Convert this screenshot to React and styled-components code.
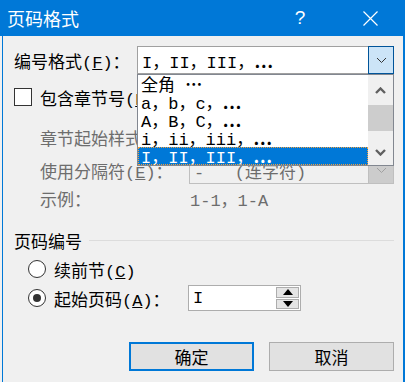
import styled, { createGlobalStyle } from 'styled-components'

const GlobalStyle = createGlobalStyle`
  html, body { margin: 0; padding: 0; background: #f0f0f0; }
  body {
    font-family: 'Liberation Mono', 'Noto Sans CJK SC', monospace;
    font-size: 17px;
    color: #000;
  }
  * { box-sizing: border-box; }
`

const Window = styled.div`
  width: 405px;
  height: 382px;
  display: flex;
  flex-direction: column;
  overflow: hidden;
`
const TitleBar = styled.div`
  height: 36px;
  flex: none;
  background: #0078d7;
  color: #fff;
  display: flex;
  align-items: center;
  padding: 0 12px 0 7px;
  font-family: 'Noto Sans CJK SC', sans-serif;
  font-size: 18px;
`
const Title = styled.div`
  flex: 1;
  line-height: 1;
`
const HelpBtn = styled.div`
  width: 46px;
  text-align: center;
  font-family: 'Liberation Sans', sans-serif;
  font-size: 19px;
  margin-right: 24px;
`
const CloseBtn = styled.div`
  width: 46px;
  display: flex;
  justify-content: center;
  align-items: center;
`
const Body = styled.div`
  flex: 1;
  margin-left: 2px;
  border-left: 1px solid #0078d7;
  border-right: 2px solid #0078d7;
  padding: 10px 9px 0 11px;
  display: flex;
  flex-direction: column;
`
const Row = styled.div`
  display: flex;
  align-items: center;
  height: ${({ h }) => h || 20}px;
  margin-top: ${({ mt }) => mt || 0}px;
  padding-left: ${({ indent }) => indent || 0}px;
  gap: ${({ gap }) => gap || 0}px;
  color: ${({ disabled }) => (disabled ? '#6d6d6d' : '#000')};
  white-space: pre;
`
const Label = styled.div`
  width: ${({ w }) => w}px;
  flex: none;
  white-space: pre;
`
const Combo = styled.div`
  position: relative;
  width: ${({ w }) => w}px;
  height: 28px;
  display: flex;
  align-items: center;
  border: 1px solid ${({ disabled }) => (disabled ? '#bfbfbf' : '#a0a0a0')};
  background: ${({ disabled }) => (disabled ? '#f0f0f0' : '#fff')};
  color: ${({ disabled }) => (disabled ? '#6d6d6d' : '#000')};
`
const ComboText = styled.div`
  flex: 1;
  padding-left: 4px;
  white-space: pre;
`
const DropBtn = styled.div`
  width: 26px;
  height: 28px;
  margin: -1px -1px -1px 0;
  display: flex;
  align-items: center;
  justify-content: center;
  background: ${({ disabled }) => (disabled ? '#cccccc' : '#cce4f7')};
  border: 1px solid ${({ disabled }) => (disabled ? '#bfbfbf' : '#005499')};
`
const List = styled.div`
  position: absolute;
  top: 27px;
  left: -1px;
  width: 257px;
  height: 92px;
  border: 1px solid #828790;
  background: #fff;
  display: flex;
  z-index: 5;
`
const Items = styled.div`
  flex: 1;
  display: flex;
  flex-direction: column;
`
const Item = styled.div`
  height: 18px;
  line-height: 18px;
  padding-left: 3px;
  white-space: pre;
  background: ${({ selected }) => (selected ? '#0078d7' : 'transparent')};
  color: ${({ selected }) => (selected ? '#fff' : '#000')};
  outline: ${({ selected }) => (selected ? '1px dotted #f0a040' : 'none')};
  outline-offset: -1px;
`
const Dots = styled.span`
  font-family: 'Noto Sans CJK SC', sans-serif;
  font-weight: 700;
  letter-spacing: 1px;
`
const ScrollBar = styled.div`
  width: 25px;
  background: #f0f0f0;
  display: flex;
  flex-direction: column;
`
const ScrollArrow = styled.div`
  height: ${({ h }) => h}px;
  display: flex;
  align-items: center;
  justify-content: center;
`
const Thumb = styled.div`
  height: 26px;
  background: #cdcdcd;
`
const Gap = styled.div`
  flex: 1;
`
const CheckBox = styled.div`
  width: 18px;
  height: 18px;
  border: 1px solid #333;
  background: #fff;
  flex: none;
`
const Radio = styled.div`
  width: 18px;
  height: 18px;
  border-radius: 50%;
  border: 1px solid #333;
  background: #fff;
  flex: none;
  display: flex;
  align-items: center;
  justify-content: center;
  &::after {
    content: '';
    display: ${({ checked }) => (checked ? 'block' : 'none')};
    width: 8px;
    height: 8px;
    border-radius: 50%;
    background: #333;
  }
`
const Line = styled.div`
  flex: 1;
  height: 1px;
  background: #dcdcdc;
  margin-left: 7px;
`
const SpinBox = styled.div`
  width: 113px;
  height: 26px;
  border: 1px solid #adadad;
  background: #fff;
  display: flex;
  align-items: center;
`
const SpinText = styled.div`
  flex: 1;
  padding-left: 4px;
`
const SpinBtns = styled.div`
  width: 24px;
  height: 100%;
  display: flex;
  flex-direction: column;
  padding: 1px 1px 1px 0;
  gap: 1px;
`
const SpinBtn = styled.div`
  flex: 1;
  background: #e5e5e5;
  border: 1px solid #adadad;
  display: flex;
  align-items: center;
  justify-content: center;
`
const Footer = styled.div`
  display: flex;
  justify-content: flex-end;
  gap: 15px;
  margin-top: 31px;
`
const Button = styled.div`
  width: 125px;
  height: 29px;
  display: flex;
  align-items: center;
  justify-content: center;
  background: #e1e1e1;
  border: ${({ primary }) => (primary ? '2px solid #0078d7' : '1px solid #adadad')};
  font-family: 'Noto Sans CJK SC', sans-serif;
`

const Chevron = ({ color = '#333', up, bold }) => (
  <svg width="11" height="7" viewBox="0 0 11 7">
    <polyline
      points={up ? '1,6 5.5,1.5 10,6' : '1,1 5.5,5.5 10,1'}
      fill="none"
      stroke={color}
      strokeWidth={bold ? 2.4 : 1}
    />
  </svg>
)

const Tri = ({ up }) => (
  <svg width="10" height="6" viewBox="0 0 10 6">
    <polygon points={up ? '0,6 5,0 10,6' : '0,0 10,0 5,6'} fill="#000" />
  </svg>
)

const formats = [
  <>全角 <Dots>…</Dots></>,
  <>a，b，c，<Dots>…</Dots></>,
  <>A，B，C，<Dots>…</Dots></>,
  <>i，ii，iii，<Dots>…</Dots></>,
  <>I，II，III，<Dots>…</Dots></>
]

export default function App() {
  return (
    <>
      <GlobalStyle />
      <Window>
        <TitleBar>
          <Title>页码格式</Title>
          <HelpBtn>?</HelpBtn>
          <CloseBtn>
            <svg width="15" height="15" viewBox="0 0 15 15">
              <path d="M0.5 0.5 L14.5 14.5 M14.5 0.5 L0.5 14.5" stroke="#fff" strokeWidth="1.2" />
            </svg>
          </CloseBtn>
        </TitleBar>
        <Body>
          <Row h={28}>
            <Label w={123}>编号格式(<u>F</u>)：</Label>
            <Combo w={257}>
              <ComboText>I，II，III，<Dots>…</Dots></ComboText>
              <DropBtn>
                <Chevron />
              </DropBtn>
              <List>
                <Items>
                  {formats.map((f, i) => (
                    <Item key={i} selected={i === 4}>
                      {f}
                    </Item>
                  ))}
                </Items>
                <ScrollBar>
                  <ScrollArrow h={30}>
                    <Chevron up bold color="#606060" />
                  </ScrollArrow>
                  <Thumb />
                  <Gap />
                  <ScrollArrow h={26}>
                    <Chevron bold color="#606060" />
                  </ScrollArrow>
                </ScrollBar>
              </List>
            </Combo>
          </Row>
          <Row h={18} mt={14} gap={8}>
            <CheckBox />
            <span>包含章节号(<u>N</u>)</span>
          </Row>
          <Row h={28} mt={17} indent={26} disabled>
            <Label w={149}>章节起始样式</Label>
            <Combo w={205} disabled>
              <ComboText />
              <DropBtn disabled>
                <Chevron color="#a0a0a0" />
              </DropBtn>
            </Combo>
          </Row>
          <Row h={28} mt={5} indent={26} disabled>
            <Label w={149}>使用分隔符(<u>E</u>)：</Label>
            <Combo w={205} disabled>
              <ComboText>-   (连字符)</ComboText>
              <DropBtn disabled>
                <Chevron color="#a0a0a0" />
              </DropBtn>
            </Combo>
          </Row>
          <Row mt={4} indent={26} disabled>
            <Label w={150}>示例：</Label>
            <span>1-1，1-A</span>
          </Row>
          <Row mt={22}>
            <span>页码编号</span>
            <Line />
          </Row>
          <Row mt={9} indent={14} gap={8}>
            <Radio />
            <span>续前节(<u>C</u>)</span>
          </Row>
          <Row h={26} mt={6} indent={14} gap={8}>
            <Radio checked />
            <Label w={126}>起始页码(<u>A</u>)：</Label>
            <SpinBox>
              <SpinText>I</SpinText>
              <SpinBtns>
                <SpinBtn>
                  <Tri up />
                </SpinBtn>
                <SpinBtn>
                  <Tri />
                </SpinBtn>
              </SpinBtns>
            </SpinBox>
          </Row>
          <Footer>
            <Button primary>确定</Button>
            <Button>取消</Button>
          </Footer>
        </Body>
      </Window>
    </>
  )
}
